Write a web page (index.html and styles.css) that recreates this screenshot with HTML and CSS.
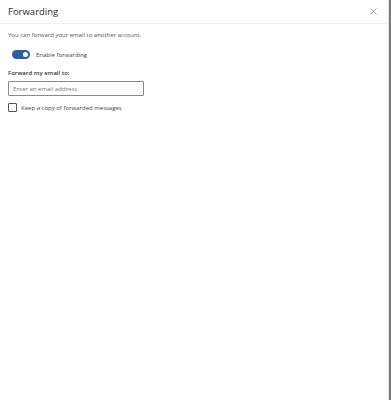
FILE: index.html
```html
<!DOCTYPE html>
<html lang="en">
<head>
  <meta charset="UTF-8" />
  <meta name="viewport" content="width=device-width, initial-scale=1.0"/>
  <title>Forwarding</title>
  <link rel="stylesheet" href="styles.css">
</head>
<body>
  <div class="frame">
    <div class="panel">
      <div class="header">
        <h1 class="title">Forwarding</h1>
        <button class="close" aria-label="Close">
          <svg width="7" height="7" viewBox="0 0 7 7">
            <path d="M0.5 0.5L6.5 6.5M6.5 0.5L0.5 6.5" stroke="#8a8a8a" stroke-width="0.8" fill="none"/>
          </svg>
        </button>
      </div>
      <div class="content">
        <p class="intro">You can forward your email to another account.</p>
        <label class="toggle-row">
          <span class="toggle"><span class="knob"></span></span>
          <span>Enable forwarding</span>
        </label>
        <div class="field-label">Forward my email to:</div>
        <input class="email" type="text" placeholder="Enter an email address">
        <label class="check-row">
          <span class="checkbox"></span>
          <span>Keep a copy of forwarded messages</span>
        </label>
      </div>
    </div>
    <div class="scrollbar"></div>
  </div>
</body>
</html>
```

FILE: styles.css
```css
body {
  margin: 0;
  font-family: "Open Sans", "Noto Sans", sans-serif;
  background: #fff;
  color: #333;
}
.frame {
  display: flex;
  height: 400px;
}
.panel {
  flex: 1;
  border-right: 1px solid #e4e4e4;
}
.scrollbar {
  width: 2px;
  background: #7c7c7c;
}
.header {
  display: flex;
  justify-content: space-between;
  align-items: center;
  height: 23px;
  padding: 0 11px 0 8px;
  border-bottom: 1px solid #f0f0f0;
}
.title {
  margin: 0;
  font-size: 9.5px;
  font-weight: 400;
  color: #2b2b2b;
}
.close {
  border: none;
  background: none;
  padding: 0;
  width: 7px;
  height: 7px;
  display: flex;
}
.content {
  padding: 7px 8px;
  font-size: 6px;
  color: #444;
}
.intro {
  margin: 0 0 11px;
  color: #555;
}
.toggle-row {
  display: flex;
  align-items: center;
  gap: 6px;
  padding-left: 4px;
  margin-bottom: 10px;
}
.toggle {
  width: 18px;
  height: 9px;
  border-radius: 5px;
  background: #2c5ea8;
  display: flex;
  align-items: center;
  justify-content: flex-end;
  padding-right: 2px;
  box-sizing: border-box;
}
.knob {
  width: 5px;
  height: 5px;
  border-radius: 50%;
  background: #fff;
}
.field-label {
  font-weight: 600;
  color: #333;
  margin-bottom: 4px;
}
.email {
  display: block;
  width: 136px;
  height: 15px;
  box-sizing: border-box;
  border: 1px solid #8a8a8a;
  border-radius: 1px;
  padding: 0 4px;
  font-family: inherit;
  font-size: 6px;
  margin-bottom: 7px;
}
.email::placeholder {
  color: #777;
}
.check-row {
  display: flex;
  align-items: center;
  gap: 4px;
}
.checkbox {
  width: 9px;
  height: 9px;
  box-sizing: border-box;
  border: 1px solid #555;
  border-radius: 1px;
}
```
